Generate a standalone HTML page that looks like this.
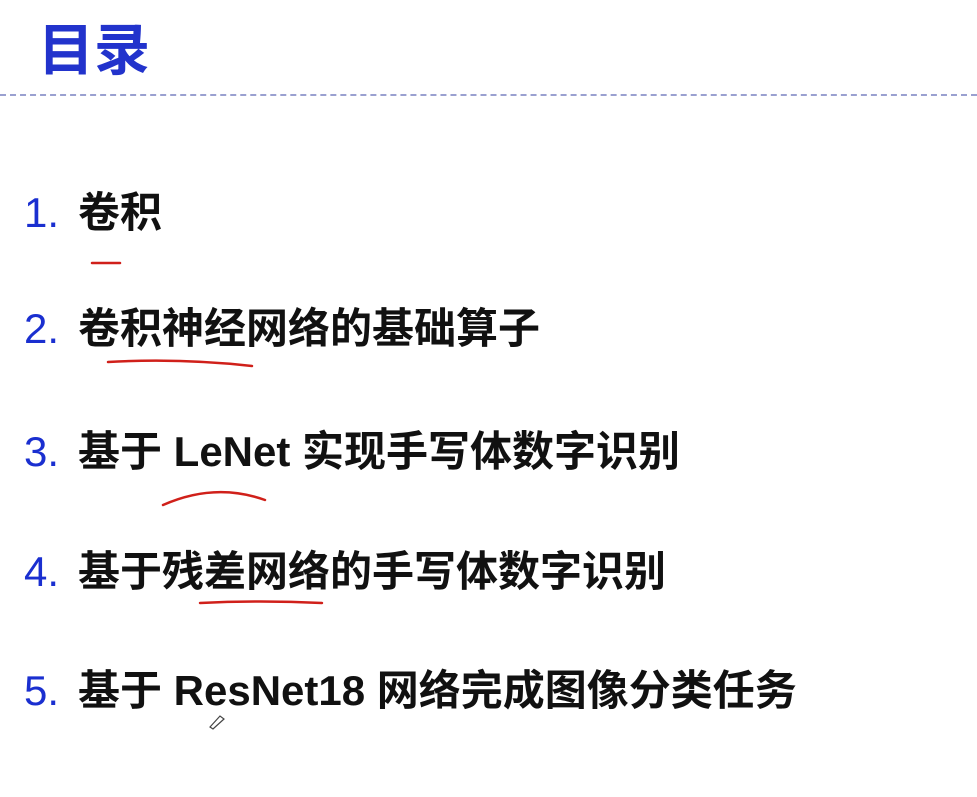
<!DOCTYPE html>
<html><head><meta charset="utf-8"><style>
body{margin:0;width:977px;height:797px;background:#fff;position:relative;overflow:hidden;font-family:"Liberation Sans","Noto Sans CJK SC",sans-serif}
.t{position:absolute;left:38px;top:19px;font-size:56px;font-weight:bold;color:#2233cc;line-height:64px}
.hr{position:absolute;left:0;top:94px;width:977px;border-top:2px dashed #9aa0d0}
.i{position:absolute;left:24px;font-size:42px;line-height:46px;color:#111;white-space:nowrap;font-weight:bold}
.i b{color:#1a2fd0;font-weight:normal;display:inline-block;width:54px}
</style></head><body>
<div class="t">目录</div>
<div class="hr"></div>
<div class="i" style="top:190px"><b>1.</b>卷积</div>
<div class="i" style="top:306px"><b>2.</b>卷积神经网络的基础算子</div>
<div class="i" style="top:429px"><b>3.</b>基于 LeNet 实现手写体数字识别</div>
<div class="i" style="top:549px"><b>4.</b>基于残差网络的手写体数字识别</div>
<div class="i" style="top:668px"><b>5.</b>基于 ResNet18 网络完成图像分类任务</div>
<svg width="977" height="797" style="position:absolute;left:0;top:0" fill="none" stroke="#d0201a" stroke-width="2.5" stroke-linecap="round">
<path d="M92 263 L120 263"/>
<path d="M108 362 Q180 358 252 366"/>
<path d="M163 505 Q215 482 265 500"/>
<path d="M200 603 Q260 600 322 603"/>
<path d="M210 727 L220 716 L224 719 L213 729 Z" stroke="#444" stroke-width="1.2"/>
</svg>
</body></html>
